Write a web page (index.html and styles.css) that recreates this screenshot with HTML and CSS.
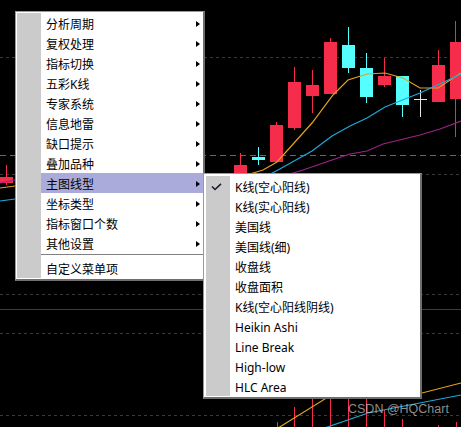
FILE: index.html
```html
<!DOCTYPE html>
<html lang="zh-CN">
<head>
  <meta charset="UTF-8" />
  <meta name="viewport" content="width=device-width, initial-scale=1.0" />
  <title>HQChart 右键菜单</title>
  <link rel="stylesheet" href="styles.css">
</head>
<body>
  <div class="stage">
    <svg class="chart" width="461" height="427" viewBox="0 0 461 427">
      <!-- grid -->
      <g class="grid">
        <line x1="0" y1="57.5" x2="461" y2="57.5" />
        <line x1="0" y1="174.5" x2="461" y2="174.5" />
        <line x1="0" y1="294.5" x2="461" y2="294.5" />
        <line x1="0" y1="333.5" x2="461" y2="333.5" />
        <line x1="0" y1="415.5" x2="461" y2="415.5" />
      </g>
      <line class="split" x1="0" y1="309.5" x2="461" y2="309.5" />
      <line class="green" x1="0" y1="155.5" x2="461" y2="155.5" />

      <!-- candles -->
      <g class="up">
        <line x1="6.5" y1="165" x2="6.5" y2="185" />
        <rect x="0" y="177" width="13" height="6" />
        <line x1="240.5" y1="153" x2="240.5" y2="175" />
        <rect x="234" y="165" width="13" height="10" />
        <line x1="276.5" y1="122" x2="276.5" y2="162" />
        <rect x="270" y="125" width="13" height="37" />
        <line x1="294.5" y1="67" x2="294.5" y2="130" />
        <rect x="288" y="82" width="13" height="46" />
        <line x1="312.5" y1="70" x2="312.5" y2="113" />
        <rect x="306" y="85" width="13" height="11" />
        <line x1="330.5" y1="38" x2="330.5" y2="94" />
        <rect x="324" y="42" width="13" height="52" />
        <line x1="384.5" y1="58" x2="384.5" y2="87" />
        <rect x="378" y="76" width="13" height="9" />
        <line x1="438.5" y1="50" x2="438.5" y2="102" />
        <rect x="432" y="65" width="13" height="37" />
        <line x1="455.5" y1="21" x2="455.5" y2="137" />
        <rect x="450" y="42" width="11" height="57" />
      </g>
      <g class="down">
        <line x1="258.5" y1="147" x2="258.5" y2="165" />
        <rect x="252" y="157" width="13" height="3" />
        <line x1="348.5" y1="27" x2="348.5" y2="73" />
        <rect x="342" y="45" width="13" height="23" />
        <line x1="366.5" y1="53" x2="366.5" y2="103" />
        <rect x="360" y="68" width="13" height="29" />
        <line x1="402.5" y1="76" x2="402.5" y2="117" />
        <rect x="396" y="76" width="13" height="29" />
      </g>
      <g class="flat">
        <line x1="420.5" y1="90" x2="420.5" y2="117" />
        <line x1="414" y1="99.5" x2="427" y2="99.5" />
      </g>
      <g class="up">
        <line x1="277.5" y1="422" x2="277.5" y2="427" />
        <line x1="294.5" y1="407" x2="294.5" y2="427" />
        <line x1="312.5" y1="398" x2="312.5" y2="427" />
        <line x1="330.5" y1="398" x2="330.5" y2="427" />
        <line x1="348.5" y1="398" x2="348.5" y2="427" />
        <line x1="366.5" y1="398" x2="366.5" y2="427" />
        <line x1="384.5" y1="410" x2="384.5" y2="427" />
        <line x1="402.5" y1="419" x2="402.5" y2="427" />
        <line x1="438.5" y1="425" x2="438.5" y2="427" />
        <line x1="456.5" y1="422" x2="456.5" y2="427" />
      </g>

      <!-- moving averages -->
      <polyline class="ma5" points="0,188 15,186 230,180 263,170 277,162 312,123 333,95 348,80 367,74 385,73 403,78 420,88 438,88 461,73" />
      <polyline class="ma10" points="0,201 15,199 250,185 278,170 312,151 332,136 350,126 367,118 385,107 420,93 461,74" />
      <polyline class="ma20" points="0,183 15,180 270,180 303,170 332,160 350,154 367,151 383,144 420,135 440,129 461,121" />
      <polyline class="ma5" points="270,433 328,397 380,396 422,393 461,383" />
      <polyline class="ma10" points="310,433 368,413 461,395" />
    </svg>

    <div class="watermark">CSDN @HQChart</div>

    <ul class="menu menu-main">
      <li class="item"><span class="icon"></span><span class="label">分析周期</span><span class="arrow"></span></li>
      <li class="item"><span class="icon"></span><span class="label">复权处理</span><span class="arrow"></span></li>
      <li class="item"><span class="icon"></span><span class="label">指标切换</span><span class="arrow"></span></li>
      <li class="item"><span class="icon"></span><span class="label">五彩K线</span><span class="arrow"></span></li>
      <li class="item"><span class="icon"></span><span class="label">专家系统</span><span class="arrow"></span></li>
      <li class="item"><span class="icon"></span><span class="label">信息地雷</span><span class="arrow"></span></li>
      <li class="item"><span class="icon"></span><span class="label">缺口提示</span><span class="arrow"></span></li>
      <li class="item"><span class="icon"></span><span class="label">叠加品种</span><span class="arrow"></span></li>
      <li class="item active"><span class="icon"></span><span class="label">主图线型</span><span class="arrow"></span></li>
      <li class="item"><span class="icon"></span><span class="label">坐标类型</span><span class="arrow"></span></li>
      <li class="item"><span class="icon"></span><span class="label">指标窗口个数</span><span class="arrow"></span></li>
      <li class="item"><span class="icon"></span><span class="label">其他设置</span><span class="arrow"></span></li>
      <li class="sep"><span class="icon"></span><span class="rule"></span></li>
      <li class="item"><span class="icon"></span><span class="label">自定义菜单项</span></li>
    </ul>

    <ul class="menu menu-sub">
      <li class="item"><span class="icon">
        <svg width="11" height="8" viewBox="0 0 11 8"><path d="M1 3.5 L4 6.5 L10 0.8" fill="none" stroke="#1c1c2c" stroke-width="1.6" /></svg>
      </span><span class="label">K线(空心阳线)</span></li>
      <li class="item"><span class="icon"></span><span class="label">K线(实心阳线)</span></li>
      <li class="item"><span class="icon"></span><span class="label">美国线</span></li>
      <li class="item"><span class="icon"></span><span class="label">美国线(细)</span></li>
      <li class="item"><span class="icon"></span><span class="label">收盘线</span></li>
      <li class="item"><span class="icon"></span><span class="label">收盘面积</span></li>
      <li class="item"><span class="icon"></span><span class="label">K线(空心阳线阴线)</span></li>
      <li class="item"><span class="icon"></span><span class="label">Heikin Ashi</span></li>
      <li class="item"><span class="icon"></span><span class="label">Line Break</span></li>
      <li class="item"><span class="icon"></span><span class="label">High-low</span></li>
      <li class="item"><span class="icon"></span><span class="label">HLC Area</span></li>
    </ul>
  </div>
</body>
</html>
```

FILE: styles.css
```css
* { margin: 0; padding: 0; box-sizing: border-box; }
html, body {
  width: 100%; height: 100%; overflow: hidden;
  background: #000; font-family: "Noto Sans", "Noto Sans CJK SC", sans-serif;
}
.stage { position: relative; width: 461px; height: 427px; }
.chart { position: absolute; top: 0; left: 0; display: block; }

.grid line { stroke: #3a3a3a; stroke-width: 1; stroke-dasharray: 3 3; }
.split { stroke: #3c3c46; stroke-width: 1; }
.green { stroke: #1f9a1f; stroke-width: 1; stroke-dasharray: 6 4; }
.up line { stroke: #f52c4a; stroke-width: 1; }
.up rect { fill: #f52c4a; }
.down line { stroke: #55ffff; stroke-width: 1; }
.down rect { fill: #55ffff; }
.flat line { stroke: #e8e8e8; stroke-width: 1; }
polyline { fill: none; stroke-width: 1.2; }
.ma5 { stroke: #e3a21c; }
.ma10 { stroke: #1fa9d9; }
.ma20 { stroke: #9b2486; }

.watermark {
  position: absolute; left: 348px; top: 402px;
  font-family: "Liberation Sans", sans-serif; font-size: 12.5px;
  color: rgba(190,190,190,0.75);
}

.menu {
  position: absolute; list-style: none; background: #fff;
  border: 1px solid #9a9a9a; border-right: 2px solid #6e6e6e; border-bottom: 2px solid #6e6e6e;
  font-size: 12px; color: #000;
}
.menu-main { left: 15px; top: 11px; width: 190px; padding: 1px 0 1px 1px; }
.menu-sub { left: 203px; top: 173px; width: 219px; padding: 2px 0 1px 2px; }

.item { display: flex; align-items: center; height: 20px; }
.icon {
  width: 24px; height: 100%; flex: none; background: #cbcbcb;
  display: flex; align-items: center; justify-content: center;
}
.icon svg { margin-left: -3px; margin-top: 1px; }
.label { padding-left: 5px; white-space: nowrap; }
.item .label { flex: 1; height: 100%; line-height: 24px; }
.active .label, .active .arrow { background: #aaaadb; }
.arrow {
  height: 100%; width: 10px; flex: none; position: relative;
}
.arrow::after {
  content: ""; position: absolute; right: 3px; top: 8px;
  border-left: 4px solid #000; border-top: 3.5px solid transparent; border-bottom: 3.5px solid transparent;
}

.sep { display: flex; height: 5px; }
.sep .icon { height: 5px; }
.rule { flex: 1; height: 1px; margin-top: 1px; background: #808080; }
```
